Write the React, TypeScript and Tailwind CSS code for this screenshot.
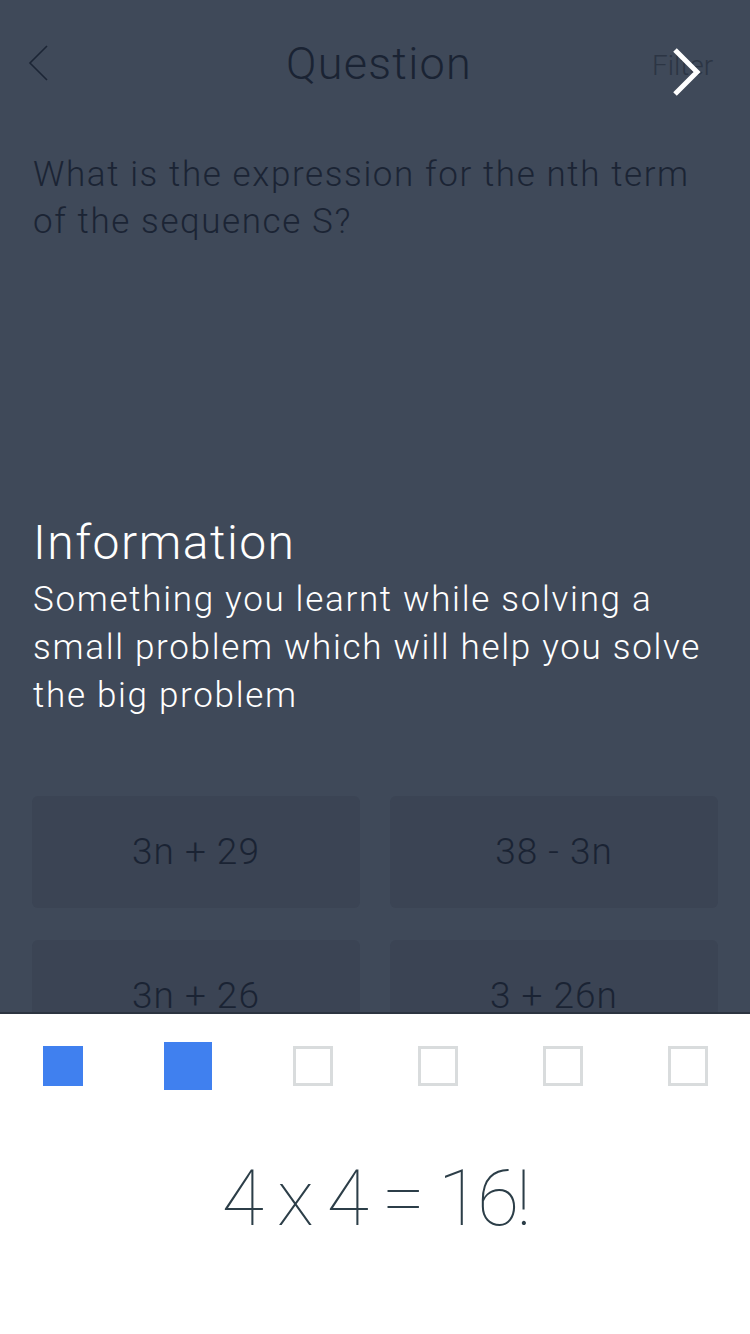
import React from 'react';

const answers = ['3n + 29', '38 - 3n', '3n + 26', '3 + 26n'];

const steps = [
  { done: true, active: false },
  { done: true, active: true },
  { done: false, active: false },
  { done: false, active: false },
  { done: false, active: false },
  { done: false, active: false },
];

const App: React.FC = () => {
  return (
    <div
      className="w-[750px] h-[1334px] overflow-hidden flex flex-col bg-[#3f4959]"
      style={{ fontFamily: 'Roboto, "Liberation Sans", sans-serif' }}
    >
      {/* header */}
      <div className="relative h-[130px] flex items-center justify-center">
        <svg className="absolute left-[26px] top-[44px]" width="24" height="38" viewBox="0 0 24 38">
          <path d="M21 2 L4 19 L21 36" fill="none" stroke="#1c2535" strokeWidth="1.6" />
        </svg>
        <h1 className="text-[45px] tracking-[1.3px] font-light text-[#1a2333] -mt-[2px] pb-[1px] pl-[8px]">Question</h1>
        <span className="absolute left-[652px] top-[45px] text-[28px] font-light text-[#2c3544]">Filter</span>
        <svg className="absolute left-[668px] top-[46px]" width="36" height="52" viewBox="0 0 36 52">
          <path d="M7 4 L29 26 L7 48" fill="none" stroke="#ffffff" strokeWidth="5" />
        </svg>
      </div>

      <p className="px-[33px] text-[35px] tracking-[1.6px] leading-[47px] font-light text-[#1b2434] mt-[21px]">
        What is the expression for the nth term of the sequence S?
      </p>

      <div className="px-[33px] mt-[270px]">
        <h2 className="text-[48px] tracking-[1.5px] leading-[56px] font-light text-white">Information</h2>
        <p className="text-[35px] tracking-[1.7px] leading-[48px] font-light text-white mt-[5px]">
          Something you learnt while solving a small problem which will help you solve the big problem
        </p>
      </div>

      <div className="px-[32px] mt-[76px] grid grid-cols-2 gap-x-[30px] gap-y-[32px]">
        {answers.map((a) => (
          <div
            key={a}
            className="h-[112px] rounded-[6px] bg-[#3b4454] flex items-center justify-center text-[37px] tracking-[1px] font-light text-[#1a2333]"
          >
            {a}
          </div>
        ))}
      </div>

      {/* bottom panel */}
      <div className="absolute left-0 top-[1012px] w-[750px] h-[322px] bg-white border-t-2 border-[#2c3440] flex flex-col">
        <div className="flex items-center h-[76px] mt-[14px]">
          {steps.map((s, i) => (
            <div key={i} className="flex-1 flex items-center justify-center">
              <div
                className={
                  s.done
                    ? s.active
                      ? 'w-[48px] h-[48px] bg-[#4080ef]'
                      : 'w-[40px] h-[40px] bg-[#4080ef]'
                    : 'w-[40px] h-[40px] border-[3px] border-[#d9dcdd] bg-white'
                }
              />
            </div>
          ))}
        </div>
        <div className="flex-1 flex justify-center gap-[16px] pt-[50px] text-[77px] leading-[90px] tracking-[-3px] font-thin text-[#2c3e48]">
          <span>4</span>
          <span>x</span>
          <span>4</span>
          <span>=</span>
          <span>16!</span>
        </div>
      </div>
    </div>
  );
};

export default App;
